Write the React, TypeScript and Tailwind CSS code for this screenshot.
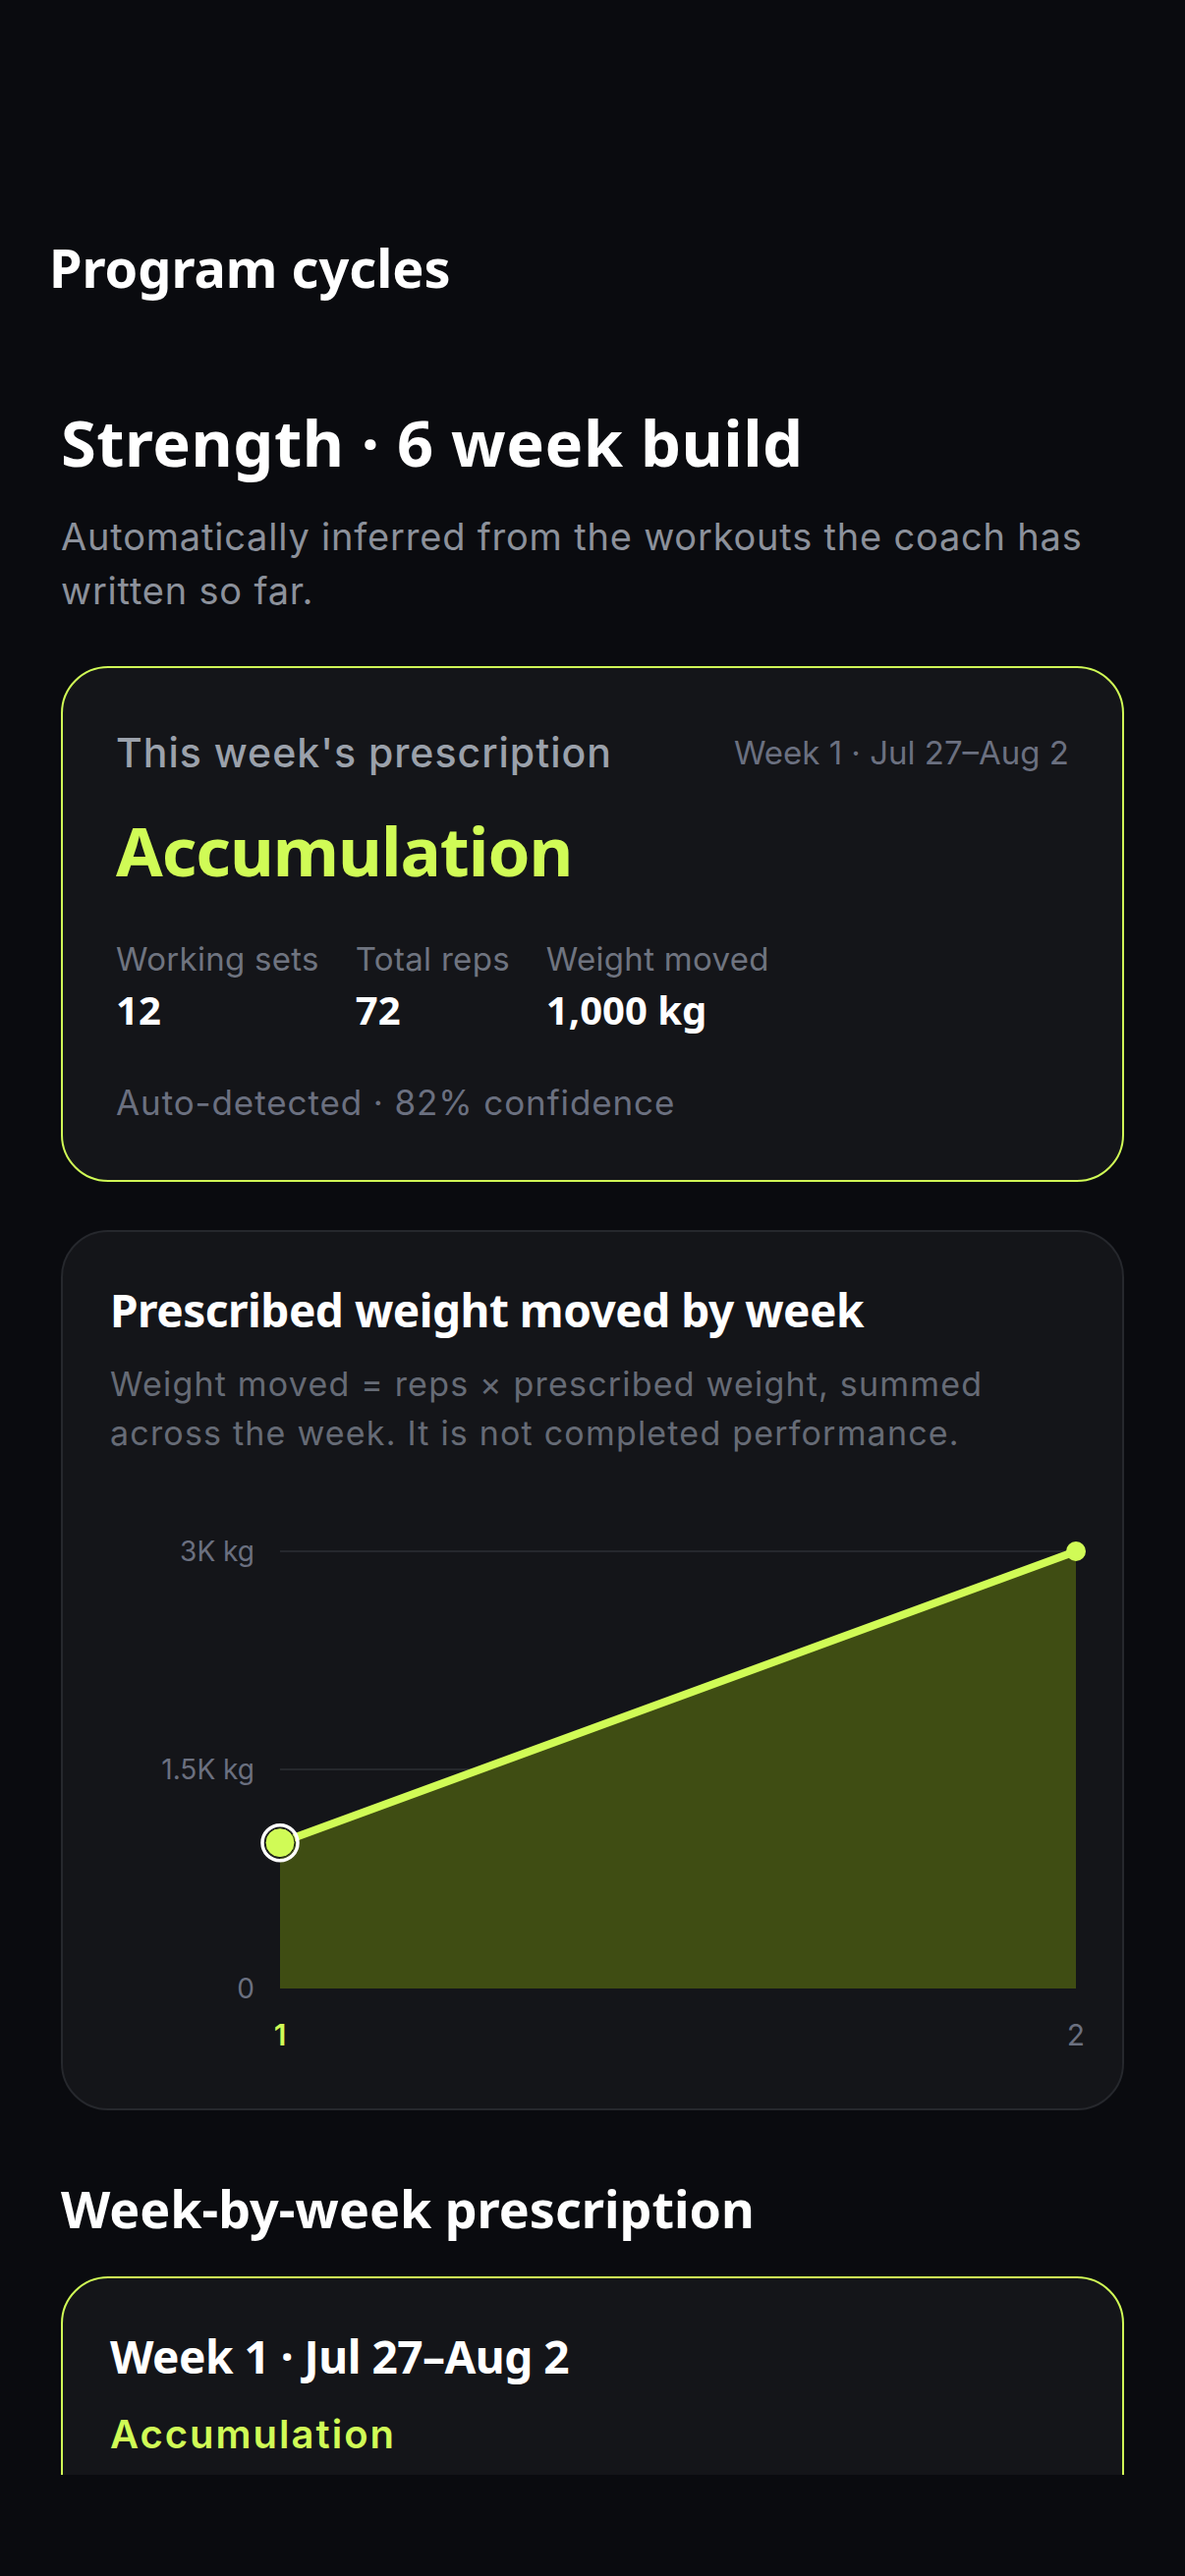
import React from "react";

const LIME = "#d0fb56";

const heading = "font-['Noto_Sans','Lato',sans-serif]";
const body = "font-['Inter','Noto_Sans',sans-serif]";

function StatCell({ label, value }: { label: string; value: string }) {
  return (
    <div className="flex flex-col gap-[8px]">
      <span className={`${body} text-[33px] leading-[1.2] tracking-[0.3px] text-[#6f7480]`}>{label}</span>
      <span className={`${heading} text-[40px] leading-[1.2] font-bold text-white`}>{value}</span>
    </div>
  );
}

function WeightChart() {
  // plot coords inside the svg
  const x1 = 173;
  const x2 = 983;
  const yTop = 95;
  const yMid = 317;
  const yZero = 540;
  const max = 3000;
  const weeks = [1000, 3000];
  const y = (v: number) => yZero - (v / max) * (yZero - yTop);
  const p1 = y(weeks[0]);
  const p2 = y(weeks[1]);

  return (
    <svg width="982" height="611" viewBox="0 0 982 611" className="block overflow-visible">
      <line x1={x1} y1={yTop} x2={x2} y2={yTop} stroke="#26282d" strokeWidth="2" />
      <line x1={x1} y1={yMid} x2={x2} y2={yMid} stroke="#26282d" strokeWidth="2" />

      <polygon points={`${x1},${p1} ${x2},${p2} ${x2},${yZero} ${x1},${yZero}`} fill="#3f4d13" />
      <line x1={x1} y1={p1} x2={x2} y2={p2} stroke={LIME} strokeWidth="8" strokeLinecap="round" />

      <circle cx={x2} cy={p2} r="10" fill={LIME} />
      <circle cx={x1} cy={p1} r="18" fill="none" stroke="#ffffff" strokeWidth="3.5" />
      <circle cx={x1} cy={p1} r="15" fill={LIME} stroke="#15161a" strokeWidth="1" />

      <g fill="#6b7080" fontFamily="Inter, sans-serif" fontSize="28" textAnchor="end">
        <text x="147" y={yTop + 10}>3K kg</text>
        <text x="147" y={yMid + 10}>1.5K kg</text>
        <text x="147" y={yZero + 10}>0</text>
      </g>

      <text x={x1} y="598" fill={LIME} fontFamily="Inter, sans-serif" fontSize="30" fontWeight="600" textAnchor="middle">
        1
      </text>
      <text x={x2} y="598" fill="#6b7080" fontFamily="Inter, sans-serif" fontSize="30" textAnchor="middle">
        2
      </text>
    </svg>
  );
}

export default function App() {
  return (
    <div className="w-full h-[2622px] bg-[#0a0b0f] overflow-hidden">
      <div className="h-[2519px] overflow-hidden pt-[240px]">
        <h1 className={`${heading} px-[50px] text-[54px] leading-[1.2] font-bold text-white`}>Program cycles</h1>

        <div className="px-[62px]">
          <h2 className={`${heading} mt-[106px] text-[65px] leading-[1.2] font-bold tracking-[0.5px] text-white`}>
            Strength · 6 week build
          </h2>
          <p className={`${body} mt-[30px] text-[38px] leading-[55px] tracking-[0.8px] text-[#8c919b]`}>
            Automatically inferred from the workouts the coach has written so far.
          </p>

          {/* current week */}
          <div className="mt-[49px] rounded-[48px] border-2 border-[#d0fb56] bg-[#141519] px-[54px] pt-[62px] pb-[58px]">
            <div className="flex items-center justify-between">
              <span className={`${body} text-[41px] leading-[1.2] font-medium tracking-[1px] text-[#9ba1ab]`}>
                This week's prescription
              </span>
              <span className={`${body} text-[33px] leading-[1.2] text-[#6b7080]`}>Week 1 · Jul 27–Aug 2</span>
            </div>
            <div className={`${heading} mt-[33px] text-[69px] leading-[1.2] font-bold tracking-[-1px] text-[#d0fb56]`}>
              Accumulation
            </div>
            <div className="mt-[50px] flex gap-[37px]">
              <StatCell label="Working sets" value="12" />
              <StatCell label="Total reps" value="72" />
              <StatCell label="Weight moved" value="1,000 kg" />
            </div>
            <p className={`${body} mt-[49px] text-[35px] leading-[1.2] tracking-[0.9px] text-[#6b7080]`}>
              Auto-detected · 82% confidence
            </p>
          </div>

          {/* chart */}
          <div className="mt-[49px] rounded-[48px] border-2 border-[#26282d] bg-[#141519] px-[48px] pt-[52px] pb-[51px]">
            <h3 className={`${heading} text-[46px] leading-[1.2] font-bold tracking-[-0.5px] text-white`}>
              Prescribed weight moved by week
            </h3>
            <p className={`${body} mt-[22px] text-[34px] leading-[50px] tracking-[1.2px] text-[#666b76]`}>
              Weight moved = reps × prescribed weight, summed across the week. It is not completed performance.
            </p>
            <WeightChart />
          </div>

          <h2 className={`${heading} mt-[69px] text-[52px] leading-[1.2] font-bold text-white`}>
            Week-by-week prescription
          </h2>

          <div className="mt-[38px] rounded-[48px] border-2 border-[#d0fb56] bg-[#141519] px-[48px] pt-[52px] pb-[160px]">
            <div className={`${heading} text-[46px] leading-[1.2] font-bold tracking-[-0.5px] text-white`}>
              Week 1 · Jul 27–Aug 2
            </div>
            <div className={`${body} mt-[28px] text-[40px] leading-[1.2] font-semibold tracking-[2px] text-[#d0fb56]`}>
              Accumulation
            </div>
          </div>
        </div>
      </div>
    </div>
  );
}
